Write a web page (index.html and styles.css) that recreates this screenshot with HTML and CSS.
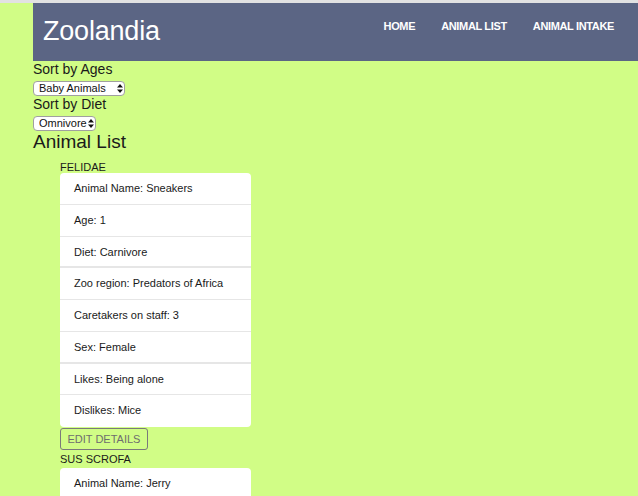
FILE: index.html
```html
<!DOCTYPE html>
<html>
<head>
<meta charset="utf-8">
<link rel="stylesheet" href="styles.css">
</head>
<body>
<nav class="navbar">
  <div class="brand">Zoolandia</div>
  <ul class="nav-links">
    <li>HOME</li>
    <li>ANIMAL LIST</li>
    <li>ANIMAL INTAKE</li>
  </ul>
</nav>
<div class="filters">
  <div class="label">Sort by Ages</div>
  <div class="select-wrap sel-ages">
    <select class="select"><option>Baby Animals</option></select>
    <svg class="arrows" width="6" height="9" viewBox="0 0 6 9"><path d="M3 0 L6 3.5 H0 Z M3 9 L6 5.5 H0 Z" fill="#111"/></svg>
  </div>
  <div class="label">Sort by Diet</div>
  <div class="select-wrap sel-diet">
    <select class="select"><option>Omnivore</option></select>
    <svg class="arrows" width="6" height="9" viewBox="0 0 6 9"><path d="M3 0 L6 3.5 H0 Z M3 9 L6 5.5 H0 Z" fill="#111"/></svg>
  </div>
  <h2 class="list-title">Animal List</h2>
</div>
<div class="animals">
  <div class="species">FELIDAE</div>
  <ul class="card">
    <li>Animal Name: Sneakers</li>
    <li>Age: 1</li>
    <li class="thick">Diet: Carnivore</li>
    <li>Zoo region: Predators of Africa</li>
    <li>Caretakers on staff: 3</li>
    <li class="thick">Sex: Female</li>
    <li>Likes: Being alone</li>
    <li>Dislikes: Mice</li>
  </ul>
  <button class="edit-btn">EDIT DETAILS</button>
  <div class="species">SUS SCROFA</div>
  <ul class="card">
    <li>Animal Name: Jerry</li>
  </ul>
</div>
</body>
</html>
```
FILE: styles.css
```css
html, body {
  margin: 0;
  padding: 0;
}
body {
  background: #d1fd86;
  border-top: 3px solid #e2e2e2;
  padding-left: 33px;
  font-family: "Liberation Sans", Arial, sans-serif;
  color: #1a1a1a;
  height: 493px;
  overflow: hidden;
}
.navbar {
  background: #5b6584;
  height: 58px;
  display: flex;
  align-items: center;
  justify-content: space-between;
  padding: 0 24px 0 10px;
}
.brand {
  color: #fff;
  font-size: 27px;
  letter-spacing: -0.2px;
  line-height: 32px;
  margin-top: -3px;
}
.nav-links {
  list-style: none;
  margin: 0;
  padding: 0;
  display: flex;
  gap: 26px;
  margin-top: -12px;
}
.nav-links li {
  color: #fff;
  font-size: 11px;
  font-weight: bold;
  letter-spacing: -0.35px;
}
.filters {
  display: flex;
  flex-direction: column;
  align-items: flex-start;
}
.label {
  font-size: 14px;
  line-height: 16px;
  margin-top: 0;
}
.select-wrap {
  position: relative;
  margin-top: 4px;
  margin-bottom: 0;
  height: 15px;
}
.select {
  appearance: none;
  -webkit-appearance: none;
  background: #fff;
  border: 1px solid #a0a0a0;
  border-radius: 4px;
  font-family: "Liberation Sans", Arial, sans-serif;
  font-size: 11px;
  color: #111;
  height: 15px;
  padding: 0 0 0 5px;
  margin: 0;
  line-height: 13px;
  display: block;
}
.sel-ages .select { width: 92px; }
.sel-diet .select { width: 63px; }
.arrows {
  position: absolute;
  top: 3px;
}
.sel-ages .arrows { left: 84px; }
.sel-diet .arrows { left: 55px; }
.list-title {
  font-size: 19px;
  font-weight: normal;
  line-height: 20px;
  margin: 1px 0 0 0;
}
.animals {
  padding-left: 27px;
  margin-top: 9px;
}
.species {
  font-size: 11px;
  line-height: 12px;
  height: 12px;
}
.card {
  list-style: none;
  margin: 0;
  padding: 0;
  width: 191px;
  background: #fff;
  border-radius: 4px;
}
.card li {
  font-size: 11px;
  line-height: 12.75px;
  padding: 9px 14px;
  border-bottom: 1px solid #e6e6e6;
}
.card li.thick {
  border-bottom: 2px solid #e6e6e6;
  padding-bottom: 8px;
}
.card li:last-child {
  border-bottom: none;
  padding-bottom: 10px;
}
.edit-btn {
  display: block;
  margin: 1px 0 3px 0;
  width: 88px;
  height: 22px;
  padding: 0;
  background: transparent;
  border: 1px solid #7a7a7a;
  border-radius: 3px;
  color: #6e6e6e;
  font-family: "Liberation Sans", Arial, sans-serif;
  font-size: 11px;
}
.edit-btn + .species {
  margin-bottom: 3px;
}
```
